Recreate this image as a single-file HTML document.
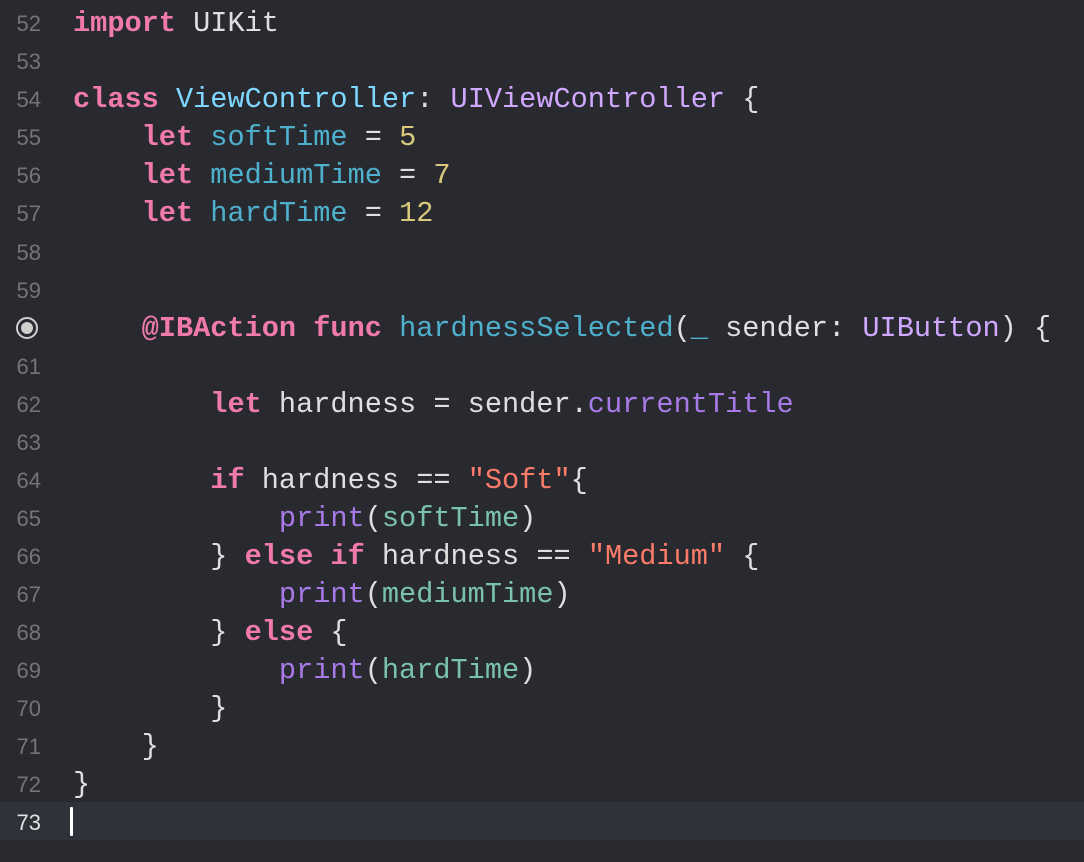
<!DOCTYPE html>
<html><head><style>
html,body{margin:0;padding:0;background:#292a30;width:1084px;height:862px;overflow:hidden}
.l{position:absolute;left:0;width:1084px;height:38px;font:28.6px/38px "Liberation Mono",monospace;color:#dfdfe0;white-space:pre}
.n{position:absolute;left:0;top:2px;width:41px;text-align:right;font:22px/38px "Liberation Sans",sans-serif;color:#747478}
.c{position:absolute;left:73px;top:2px}
.k{color:#f07aab;font-weight:bold}.t{color:#7fd8ff}.d{color:#4eb0cc}.num{color:#d9c97c}
.s{color:#fc7b69}.o{color:#d0a8ff}.p{color:#a77ae8}.v{color:#7ac2ae}
</style></head><body>
<div class="l" style="top:3px"><span class="n">52</span><span class="c"><span class="k">import</span> UIKit</span></div>
<div class="l" style="top:41px"><span class="n">53</span></div>
<div class="l" style="top:79px"><span class="n">54</span><span class="c"><span class="k">class</span> <span class="t">ViewController</span>: <span class="o">UIViewController</span> {</span></div>
<div class="l" style="top:117px"><span class="n">55</span><span class="c">    <span class="k">let</span> <span class="d">softTime</span> = <span class="num">5</span></span></div>
<div class="l" style="top:155px"><span class="n">56</span><span class="c">    <span class="k">let</span> <span class="d">mediumTime</span> = <span class="num">7</span></span></div>
<div class="l" style="top:193px"><span class="n">57</span><span class="c">    <span class="k">let</span> <span class="d">hardTime</span> = <span class="num">12</span></span></div>
<div class="l" style="top:232px"><span class="n">58</span></div>
<div class="l" style="top:270px"><span class="n">59</span></div>
<div class="l" style="top:308px"><span style="position:absolute;left:16px;top:9px;width:22px;height:22px;border:2.5px solid #cfcfd0;border-radius:50%;box-sizing:border-box"></span><span style="position:absolute;left:21px;top:14px;width:12px;height:12px;background:#cfcfd0;border-radius:50%"></span><span class="c">    <span class="k">@IBAction</span> <span class="k">func</span> <span class="d">hardnessSelected</span>(<span class="d">_</span> sender: <span class="o">UIButton</span>) {</span></div>
<div class="l" style="top:346px"><span class="n">61</span></div>
<div class="l" style="top:384px"><span class="n">62</span><span class="c">        <span class="k">let</span> hardness = sender.<span class="p">currentTitle</span></span></div>
<div class="l" style="top:422px"><span class="n">63</span></div>
<div class="l" style="top:460px"><span class="n">64</span><span class="c">        <span class="k">if</span> hardness == <span class="s">"Soft"</span>{</span></div>
<div class="l" style="top:498px"><span class="n">65</span><span class="c">            <span class="p">print</span>(<span class="v">softTime</span>)</span></div>
<div class="l" style="top:536px"><span class="n">66</span><span class="c">        } <span class="k">else</span> <span class="k">if</span> hardness == <span class="s">"Medium"</span> {</span></div>
<div class="l" style="top:574px"><span class="n">67</span><span class="c">            <span class="p">print</span>(<span class="v">mediumTime</span>)</span></div>
<div class="l" style="top:612px"><span class="n">68</span><span class="c">        } <span class="k">else</span> {</span></div>
<div class="l" style="top:650px"><span class="n">69</span><span class="c">            <span class="p">print</span>(<span class="v">hardTime</span>)</span></div>
<div class="l" style="top:688px"><span class="n">70</span><span class="c">        }</span></div>
<div class="l" style="top:726px"><span class="n">71</span><span class="c">    }</span></div>
<div class="l" style="top:764px"><span class="n">72</span><span class="c">}</span></div>
<div class="l" style="top:802px;background:#2f3239"><span class="n" style="color:#e0e0e0">73</span><span style="position:absolute;left:70px;top:5px;width:3px;height:29px;background:#fff;border-radius:1px"></span></div>
</body></html>
